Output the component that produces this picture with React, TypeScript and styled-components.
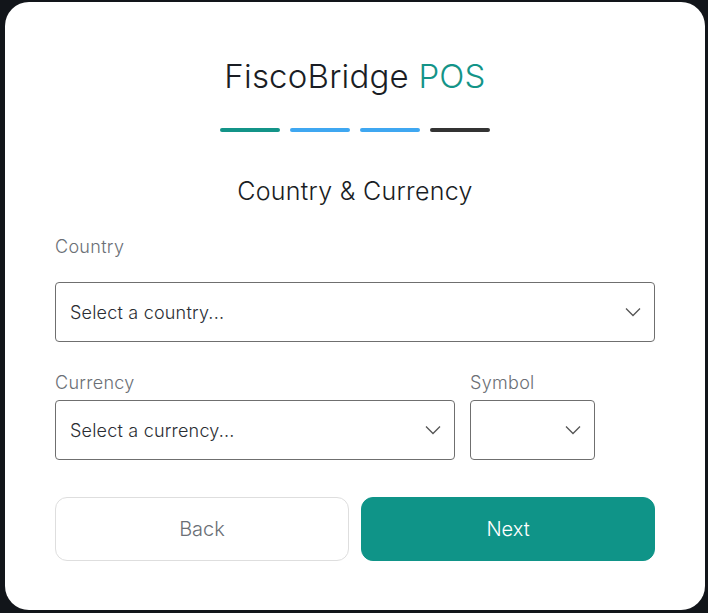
import React from 'react'
import styled, { createGlobalStyle } from 'styled-components'

const GlobalStyle = createGlobalStyle`
	html, body {
		margin: 0;
		padding: 0;
		background: #12151a;
	}
	body {
		font-family: Inter, 'Noto Sans', sans-serif;
	}
`

const Page = styled.div`
	padding: 2px 3px 3px 5px;
	height: 613px;
	box-sizing: border-box;
`

const Card = styled.div`
	background: #ffffff;
	border-radius: 24px;
	height: 100%;
	box-sizing: border-box;
	padding: 54px 50px 0 50px;
	display: flex;
	flex-direction: column;
`

const Title = styled.h1`
	margin: 0;
	text-align: center;
	font-size: 33px;
	line-height: 40px;
	font-weight: 300;
	letter-spacing: 0.2px;
	color: #1a1d24;
`

const Accent = styled.span`
	color: #139488;
`

const Steps = styled.div`
	display: flex;
	justify-content: center;
	gap: 10px;
	margin-top: 32px;
`

const Step = styled.div<{ $color: string }>`
	width: 60px;
	height: 4px;
	border-radius: 2px;
	background: ${p => p.$color};
`

const Heading = styled.h2`
	margin: 43px 0 0;
	text-align: center;
	font-size: 25px;
	line-height: 32px;
	font-weight: 300;
	letter-spacing: 0.3px;
	color: #1a1d24;
`

const Label = styled.label<{ $gap: number }>`
	display: block;
	font-size: 18px;
	line-height: 24px;
	font-weight: 300;
	letter-spacing: 0.3px;
	color: #6b6f76;
	margin-bottom: ${p => p.$gap}px;
`

const Field = styled.div<{ $top: number; $width?: number }>`
	margin-top: ${p => p.$top}px;
	${p => (p.$width ? `width: ${p.$width}px;` : '')}
`

const Row = styled.div`
	display: flex;
	gap: 15px;
`

const SelectBox = styled.div`
	height: 60px;
	box-sizing: border-box;
	border: 1px solid #6f6f6f;
	border-radius: 4px;
	display: flex;
	align-items: center;
	justify-content: space-between;
	padding: 0 13px 0 14px;
	font-size: 18px;
	font-weight: 300;
	letter-spacing: 0.2px;
	color: #2a2d33;
`

const Buttons = styled.div`
	display: flex;
	gap: 12px;
	margin-top: 37px;
`

const Button = styled.button<{ $primary?: boolean }>`
	flex: 1;
	height: 64px;
	border-radius: 12px;
	font-family: inherit;
	font-size: 20px;
	font-weight: 300;
	cursor: pointer;
	border: 1px solid ${p => (p.$primary ? '#0f9488' : '#dedede')};
	background: ${p => (p.$primary ? '#0f9488' : '#ffffff')};
	color: ${p => (p.$primary ? '#ffffff' : '#6b6f76')};
`

function Chevron() {
	return (
		<svg width="16" height="10" viewBox="0 0 16 10" fill="none">
			<path d="M1 1.5 L8 8.5 L15 1.5" stroke="#555" strokeWidth="1.3" />
		</svg>
	)
}

function Select({ placeholder }: { placeholder?: string }) {
	return (
		<SelectBox>
			<span>{placeholder}</span>
			<Chevron />
		</SelectBox>
	)
}

export default function App() {
	return (
		<>
			<GlobalStyle />
			<Page>
				<Card>
					<Title>
						FiscoBridge <Accent>POS</Accent>
					</Title>
					<Steps>
						<Step $color="#139488" />
						<Step $color="#3fa7f1" />
						<Step $color="#3fa7f1" />
						<Step $color="#333333" />
					</Steps>
					<Heading>Country &amp; Currency</Heading>
					<Field $top={28}>
						<Label $gap={23}>Country</Label>
						<Select placeholder="Select a country..." />
					</Field>
					<Row>
						<Field $top={29} $width={400}>
							<Label $gap={5}>Currency</Label>
							<Select placeholder="Select a currency..." />
						</Field>
						<Field $top={29} $width={125}>
							<Label $gap={5}>Symbol</Label>
							<Select />
						</Field>
					</Row>
					<Buttons>
						<Button>Back</Button>
						<Button $primary>Next</Button>
					</Buttons>
				</Card>
			</Page>
		</>
	)
}
